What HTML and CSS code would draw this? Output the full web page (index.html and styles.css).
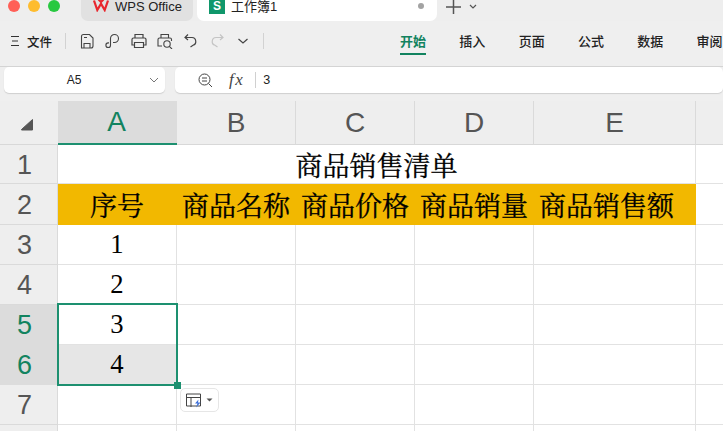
FILE: index.html
```html
<!DOCTYPE html>
<html lang="zh">
<head>
<meta charset="utf-8">
<title>工作簿1</title>
<link rel="stylesheet" href="styles.css">
</head>
<body>
<div class="app">
  <header class="titlebar">
    <div class="lights"><i class="light red"></i><i class="light yellow"></i><i class="light green"></i></div>
    <div class="tab tab-home">
      <svg class="logo" width="16" height="13" viewBox="0 0 16 13"><path d="M1 1.5 4.3 11 8 4.6 11.7 11 15 1.500" fill="none" stroke="#e8262d" stroke-width="2.200"/><path d="M5.500 0.500 8 3 10.500 0.500" fill="none" stroke="#e8262d" stroke-width="2"/></svg>
      <span>WPS Office</span>
    </div>
    <div class="tab tab-doc">
      <span class="sheet-badge">S</span>
      <span class="doc-name">工作簿1</span>
      <i class="dot"></i>
    </div>
    <svg class="plus" width="15" height="15" viewBox="0 0 15 15"><path d="M7.500 0v14M0 7h15" stroke="#555" stroke-width="1.500"/></svg>
    <svg class="tiny-chev" width="8" height="5" viewBox="0 0 8 5"><path d="M1 1l3 3 3-3" fill="none" stroke="#555" stroke-width="1.200"/></svg>
  </header>

  <nav class="toolbar">
    <svg class="menu-ico" width="8" height="10" viewBox="0 0 8 10"><path d="M0 .5h8M1 5h6M0 9.500h8" stroke="#333" stroke-width="1"/></svg>
    <span class="file-label">文件</span>
    <i class="vsep first"></i>
    <div class="quick">
      <svg width="16" height="16" viewBox="0 0 16 16" fill="none" stroke="#444" stroke-width="1.100"><path d="M2.500 15V3.500q0-2 2-2h6l3.500 3.500v8q0 2-2 2zM5 15V10.500h6V15M5 4.500h3"/></svg>
      <svg width="16" height="16" viewBox="0 0 16 16" fill="none" stroke="#444" stroke-width="1.100"><path d="M8 9.500H9.500A4 4 0 0 0 9.500 1.500 4 4 0 0 0 5.500 5.500V12.200A2.300 2.300 0 1 1 3.200 9.900H4"/></svg>
      <svg width="16" height="16" viewBox="0 0 16 16" fill="none" stroke="#444" stroke-width="1.200"><path d="M4 5V1.500h8V5M3.500 12H1V6.500q0-1.500 1.500-1.500h11q1.500 0 1.500 1.500V12h-2.500M3.500 9.500h9V14.500h-9z"/></svg>
      <svg width="16" height="16" viewBox="0 0 16 16" fill="none" stroke="#444" stroke-width="1.100"><path d="M4 5V1.500h7.500V5M5 13H1V6.500Q1 5 2.500 5H13q1.500 0 1.500 1.500V8"/><circle cx="10" cy="11" r="3.200"/><path d="M12.300 13.300 15 16"/></svg>
      <svg width="16" height="16" viewBox="0 0 16 16" fill="none" stroke="#444" stroke-width="1.200"><path d="M5 1.500 2 4.500 5 7M2.500 4.500H9a4 4 0 0 1 1 7.800L7.500 14"/></svg>
      <svg width="16" height="16" viewBox="0 0 16 16" fill="none" stroke="#c4c4c4" stroke-width="1.200"><path d="M11 1.500 14 4.500 11 7M13.500 4.500H7a4 4 0 0 0-1 7.800L8.500 14"/></svg>
      <svg width="16" height="16" viewBox="0 0 16 16" fill="none" stroke="#444" stroke-width="1.200"><path d="M3.500 6 8 10 12.500 6"/></svg>
    </div>
    <i class="vsep second"></i>
    <ul class="ribbon">
      <li class="active">开始</li><li>插入</li><li>页面</li><li>公式</li><li>数据</li><li>审阅</li>
    </ul>
  </nav>

  <section class="formula">
    <div class="namebox">
      <span class="ref">A5</span>
      <svg width="10" height="6" viewBox="0 0 10 6"><path d="M1 1l4 4 4-4" fill="none" stroke="#777" stroke-width="1"/></svg>
    </div>
    <div class="inputbox">
      <svg class="zoom-ico" width="15" height="15" viewBox="0 0 15 15" fill="none" stroke="#444" stroke-width="1"><circle cx="6.500" cy="6.500" r="5.500"/><path d="M10.500 10.500 14 14M4 5h5M4 8h5"/></svg>
      <span class="fx">fx</span>
      <i class="fx-sep"></i>
      <span class="value">3</span>
    </div>
  </section>

  <main class="sheet">
    <div class="corner"><svg width="14" height="13" viewBox="0 0 14 13"><path d="M1.500 11.500 12.500 1.500V12H1.500z" fill="#555" stroke="#555" stroke-linejoin="round"/></svg></div>
    <div class="colhead on">A</div><div class="colhead">B</div><div class="colhead">C</div><div class="colhead">D</div><div class="colhead">E</div><div class="colhead last"></div>

    <div class="rowhead">1</div><div class="cell title">商品销售清单</div><div class="cell last"></div>

    <div class="rowhead">2</div><div class="cell band">序号</div><div class="cell band">商品名称</div><div class="cell band">商品价格</div><div class="cell band">商品销量</div><div class="cell band wide">商品销售额</div><div class="cell last"></div>

    <div class="rowhead">3</div><div class="cell num">1</div><div class="cell"></div><div class="cell"></div><div class="cell"></div><div class="cell"></div><div class="cell last"></div>
    <div class="rowhead">4</div><div class="cell num">2</div><div class="cell"></div><div class="cell"></div><div class="cell"></div><div class="cell"></div><div class="cell last"></div>
    <div class="rowhead on">5</div><div class="cell num">3</div><div class="cell"></div><div class="cell"></div><div class="cell"></div><div class="cell"></div><div class="cell last"></div>
    <div class="rowhead on">6</div><div class="cell num picked">4</div><div class="cell"></div><div class="cell"></div><div class="cell"></div><div class="cell"></div><div class="cell last"></div>
    <div class="rowhead">7</div><div class="cell"></div><div class="cell"></div><div class="cell"></div><div class="cell"></div><div class="cell"></div><div class="cell last"></div>
    <div class="rowhead"></div><div class="cell"></div><div class="cell"></div><div class="cell"></div><div class="cell"></div><div class="cell"></div><div class="cell last"></div>

    <div class="selection"><i class="handle"></i></div>
    <button class="smart-tag" type="button">
      <svg width="16" height="15" viewBox="0 0 16 15" fill="none"><path d="M.500 1h14v12H.5zM.500 4.500h14M5 4.500V14" stroke="#444"/><path d="M12.500 6.500 9 10.500h2.500L10 14.500l4.500-5H12z" fill="#3c6fd8"/></svg>
      <svg width="7" height="4" viewBox="0 0 7 4"><path d="M.500.500l3 3 3-3z" fill="#555"/></svg>
    </button>
  </main>
</div>
</body>
</html>
```
FILE: styles.css
```css
* { box-sizing: border-box; }
html, body { margin: 0; padding: 0; }
body { width: 723px; height: 431px; overflow: hidden; background: #efefef; font-family: "Liberation Sans", "Noto Sans CJK SC", sans-serif; color: #222; }
ul { list-style: none; margin: 0; padding: 0; }
i { display: block; }

.app { width: 723px; height: 431px; display: flex; flex-direction: column; overflow: hidden; }

.titlebar { flex: none; height: 21px; display: flex; align-items: flex-start; background: #eeeeee; }
.lights { display: flex; gap: 8px; width: 81px; padding-left: 8px; }
.light { width: 12px; height: 12px; border-radius: 50%; }
.red { background: #ff5f57; }
.yellow { background: #febc2e; }
.green { background: #28c840; }
.tab { height: 21px; display: flex; border-radius: 0 0 7px 7px; font-size: 13px; line-height: 13px; }
.tab-home { width: 112px; background: #e1e1e1; padding-left: 12px; gap: 6px; }
.logo { margin-top: -1px; flex: none; }
.tab-doc { width: 240px; margin-left: 4px; background: #fff; padding-left: 12px; }
.sheet-badge { width: 16px; height: 14px; background: #10976b; color: #fff; font-size: 12px; font-weight: 700; text-align: center; }
.doc-name { margin-left: 6px; }
.dot { width: 6px; height: 6px; border-radius: 50%; background: #a3a3a3; margin: 3px 0 0 auto; margin-right: 13px; }
.plus { margin: 0 0 0 9px; }
.tiny-chev { margin: 4px 0 0 8px; }

.toolbar { flex: none; height: 46px; display: flex; align-items: center; background: #efefef; border-bottom: 1px solid #d4d4d4; padding-bottom: 5px; white-space: nowrap; }
.menu-ico { flex: none; margin-left: 11px; }
.file-label { margin-left: 8px; font-size: 12.500px; font-weight: 500; color: #222; }
.vsep { flex: none; width: 1px; height: 16px; background: #d2d2d2; }
.vsep.first { margin-left: 13px; }
.vsep.second { margin-left: 12px; }
.quick { flex: none; display: flex; gap: 10px; margin-left: 13px; }
.ribbon { flex: none; display: flex; margin-left: 136px; gap: 33.300px; }
.ribbon li { font-size: 13px; line-height: 19px; color: #222; position: relative; font-weight: 500; }
.ribbon li.active { color: #12835f; font-weight: 700; }
.ribbon li.active::after { content: ""; position: absolute; left: 0; right: 0; top: 21px; height: 2px; background: #12835f; }

.formula { flex: none; height: 34px; display: flex; gap: 10px; padding: 0 0 8px 4px; }
.namebox, .inputbox { background: #fff; border-radius: 5px; box-shadow: 0 1px 1px #cfcfcf; display: flex; align-items: center; font-size: 12px; color: #222; }
.namebox { width: 161px; padding-right: 6px; }
.ref { width: 140px; text-align: center; }
.namebox svg { margin-left: auto; }
.inputbox { flex: 1; padding-left: 23px; }
.fx { margin-left: 16px; font-family: "Liberation Serif", serif; font-style: italic; font-size: 17px; color: #444; letter-spacing: 1.500px; }
.fx-sep { width: 1px; height: 16px; background: #d0d0d0; margin-left: 11px; }
.value { margin-left: 7px; font-size: 12.500px; }

.sheet { flex: 1; min-height: 0; overflow: hidden; position: relative; display: grid; grid-template-columns: 58px 119px 119px 119px 119px 162px 27px; grid-template-rows: 44px 39px 41px 40px 40px 40px 40px 40px 40px; background: #fff; }
.corner, .colhead, .rowhead { display: flex; align-items: center; justify-content: center; background: #eeeeee; color: #555; font-size: 28px; border-right: 1px solid #dadada; }
.corner { padding: 4px 4px 0 0; border-bottom: 1px solid #d8d8d8; border-right: 0; }
.colhead { border-bottom: 1px solid #d8d8d8; }
.colhead.on { background: #dcdcdc; color: #12835f; border-bottom: 2px solid #1d9070; border-right: 0; padding-right: 2px; }
.colhead.last { border-right: 0; }
.rowhead { border-bottom: 1px solid #dadada; font-size: 27px; padding: 2px 8px 0 0; }
.rowhead.on { background: #dcdcdc; color: #12835f; border-bottom-color: #dcdcdc; }

.cell { display: flex; align-items: center; justify-content: center; background: #fff; border-right: 1px solid #e2e2e2; border-bottom: 1px solid #e2e2e2; color: #000; font-family: "Liberation Serif", "Noto Serif CJK SC", "Noto Sans CJK SC", serif; font-size: 26.670px; white-space: nowrap; }
.cell.last { border-right: 0; }
.title { grid-column: span 5; font-size: 27px; -webkit-text-stroke: 0.300px #000; }
.band { background: #f2b800; border-color: #f2b800; border-bottom: 0; font-size: 27px; -webkit-text-stroke: 0.300px #000; }
.band.wide { justify-content: flex-start; padding-left: 5px; }
.picked { background: #e6e6e6; }

.selection { position: absolute; left: 57px; top: 202px; width: 121px; height: 83px; border: 2px solid #1d9070; pointer-events: none; }
.handle { position: absolute; right: -5px; bottom: -5px; width: 7px; height: 7px; background: #1d9070; }
.smart-tag { position: absolute; left: 180px; top: 287px; width: 39px; height: 24px; padding: 0 0 0 5px; display: flex; align-items: center; gap: 4px; background: #fff; border: 1px solid #e6e6e6; border-radius: 5px; }
```
